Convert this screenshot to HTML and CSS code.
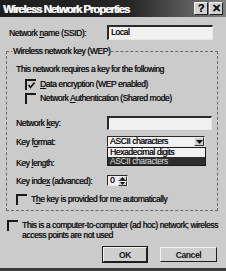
FILE: index.html
```html
<!DOCTYPE html>
<html>
<head>
<meta charset="utf-8">
<link rel="stylesheet" href="styles.css">
</head>
<body>
<div class="window">
  <div class="titlebar">
    <span class="title">Wireless Network Properties</span>
    <div class="tbtns"><span class="tbtn">?</span><span class="tbtn">&#x2715;</span></div>
  </div>
  <div class="content">
    <div class="row ssid"><span class="label">Network <u>n</u>ame (SSID):</span><div class="input">Local</div></div>
    <div class="group">
      <div class="legend">Wireless network key (WEP)</div>
      <div class="note">This network requires a key for the following</div>
      <div class="check c1"><span class="box"><svg width="9" height="9" viewBox="0 0 9 9"><path d="M1.5 4 L3.5 6.5 L7.5 1.5" fill="none" stroke="#111" stroke-width="1.6"/></svg></span><span><u>D</u>ata encryption (WEP enabled)</span></div>
      <div class="check c2"><span class="box"></span><span>Network <u>A</u>uthentication (Shared mode)</span></div>
      <div class="row nk"><span class="label">Network <u>k</u>ey:</span><div class="input wide"></div></div>
      <div class="row kf"><span class="label">Key f<u>o</u>rmat:</span>
        <div class="combo"><span class="ctext">ASCII characters</span><span class="arrow"><svg width="7" height="4" viewBox="0 0 7 4"><path d="M0 0 H7 L3.5 4 Z" fill="#111"/></svg></span>
          <div class="list"><div class="opt">Hexadecimal digits</div><div class="opt sel">ASCII characters</div></div>
        </div>
      </div>
      <div class="row kl"><span class="label">Key <u>l</u>ength:</span></div>
      <div class="row ki"><span class="label">Key inde<u>x</u> (advanced):</span>
        <div class="spin"><span class="sval">0</span><span class="sbtns"><span class="sb"><svg width="5" height="3" viewBox="0 0 5 3"><path d="M0 3 H5 L2.5 0 Z" fill="#111"/></svg></span><span class="sb"><svg width="5" height="3" viewBox="0 0 5 3"><path d="M0 0 H5 L2.5 3 Z" fill="#111"/></svg></span></span></div>
      </div>
      <div class="check auto"><span class="box"></span><span>T<u>h</u>e key is provided for me automatically</span></div>
    </div>
    <div class="check adhoc"><span class="box"></span><span class="adtext"><span class="ln">This is a computer-to-computer (ad hoc) network; wireless</span><span class="ln">access points are not used</span></span></div>
    <div class="buttons"><button class="btn ok">OK</button><button class="btn cancel">Cancel</button></div>
  </div>
</div>
</body>
</html>
```
FILE: styles.css
```css
* { box-sizing: border-box; }
html, body { margin: 0; padding: 0; background: #c9c9c9; }
body { width: 226px; height: 271px; overflow: hidden; font-family: "Liberation Sans", Arial, sans-serif; font-size: 8.5px; color: #0d0d0d; letter-spacing: -0.4px; text-shadow: 0.35px 0 0 #333; }
.window { width: 226px; height: 271px; background: #cbcbcb; border-bottom: 3px solid #3a3a3a; display: flex; flex-direction: column; }
.titlebar { height: 17px; background: linear-gradient(to right, #1d1d1d 0%, #262626 58%, #808080 100%); display: flex; align-items: center; justify-content: space-between; padding: 0 3px 0 3px; }
.title { color: #f4f4f4; font-weight: bold; font-size: 11.5px; letter-spacing: -1.1px; text-shadow: 0.4px 0 0 #f4f4f4; }
.tbtns { display: flex; gap: 1px; }
.tbtn { width: 14px; height: 13px; background: #d2d2d2; border: 1px solid; border-color: #f0f0f0 #222 #222 #f0f0f0; font-weight: bold; font-size: 11px; line-height: 11px; text-align: center; color: #111; letter-spacing: 0; }
.content { flex: 1; padding: 0 4px 0 6px; display: flex; flex-direction: column; }
.row { display: flex; align-items: center; position: relative; }
.label { width: 91px; flex: none; }
.ssid { margin-top: 8px; height: 15px; padding-left: 3px; }
.ssid .label { width: 98px; }
.input { height: 15px; width: 106px; background: #f1f1f1; border-style: solid; border-width: 2px 1px 1px 2px; border-color: #2a2a2a #e8e8e8 #e8e8e8 #2a2a2a; padding-left: 2px; line-height: 11px; }
.group { margin-top: 11px; width: 212px; height: 160px; border: 1px dashed #6a6a6a; position: relative; padding: 0 0 0 9px; display: flex; flex-direction: column; }
.legend { position: absolute; top: -6px; left: 5px; background: #cbcbcb; padding: 0 1px; }
.note { margin-top: 11px; height: 12px; line-height: 12px; }
.check { display: flex; align-items: center; height: 12px; }
.box { width: 11px; height: 11px; border-style: solid; border-width: 2px 0 0 2px; border-color: #1a1a1a; margin-right: 4px; display: flex; align-items: center; justify-content: center; flex: none; }
.c1 { margin-top: 3px; padding-left: 9px; }
.c2 { margin-top: 2px; padding-left: 9px; }
.nk { margin-top: 12px; height: 14px; }
.input.wide { height: 14px; width: 105px; }
.kf { margin-top: 6px; height: 11px; }
.combo { position: relative; width: 98px; height: 11px; background: #f1f1f1; border-style: solid; border-width: 1px; border-color: #2a2a2a #e8e8e8 #e8e8e8 #2a2a2a; display: flex; align-items: center; justify-content: space-between; padding-left: 2px; line-height: 9px; }
.arrow { width: 10px; height: 9px; background: #d0d0d0; border: 1px solid; border-color: #f0f0f0 #333 #333 #f0f0f0; display: flex; align-items: center; justify-content: center; }
.list { position: absolute; left: -1px; top: 10px; width: 99px; border: 1px solid #1a1a1a; background: #f1f1f1; }
.opt { height: 9px; line-height: 9px; padding-left: 2px; overflow: hidden; }
.opt.sel { height: 8px; line-height: 8px; background: #2e2e2e; color: #dcdcdc; text-shadow: none; }
.kl { margin-top: 10px; height: 11px; }
.ki { margin-top: 7px; height: 11px; }
.spin { width: 21px; height: 11px; background: #f1f1f1; border-style: solid; border-width: 1px; border-color: #2a2a2a #e8e8e8 #e8e8e8 #2a2a2a; display: flex; justify-content: space-between; padding-left: 2px; line-height: 9px; }
.sbtns { display: flex; flex-direction: column; width: 9px; }
.sb { flex: 1; background: #d0d0d0; border: 1px solid; border-color: #f0f0f0 #333 #333 #f0f0f0; display: flex; align-items: center; justify-content: center; }
.auto { margin-top: 7px; }
.adhoc { margin-top: 9px; height: auto; align-items: flex-start; padding-left: 1px; line-height: 10px; }
.adtext { display: flex; flex-direction: column; }
.ln { white-space: nowrap; }
.buttons { display: flex; justify-content: flex-end; gap: 13px; margin-top: 7px; padding-right: 5px; }
.btn { width: 44px; height: 15px; font: inherit; letter-spacing: inherit; font-weight: bold; background: #cfcfcf; border: 1px solid; border-color: #f2f2f2 #1e1e1e #1e1e1e #f2f2f2; padding: 0; color: #151515; text-shadow: none; }
.btn.ok { box-shadow: 0 0 0 1px #1e1e1e; }
.btn.cancel { width: 57px; }
```
